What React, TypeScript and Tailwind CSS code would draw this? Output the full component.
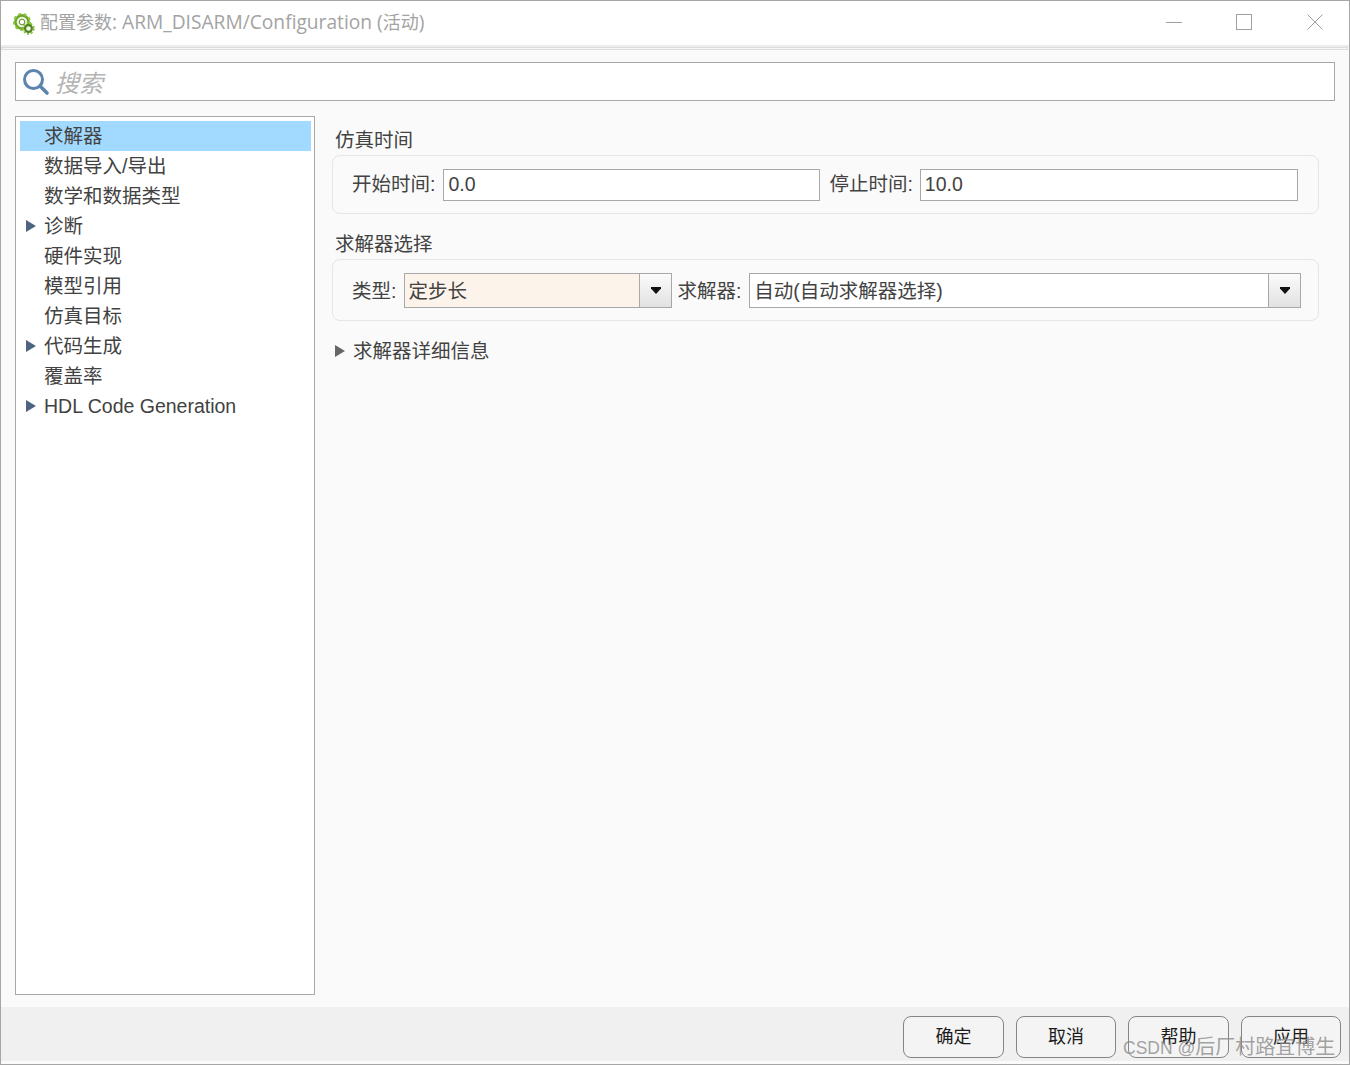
const FONT = "font-['Liberation_Sans','Noto_Sans_CJK_SC',sans-serif]";

const treeItems = [
  { label: "求解器", selected: true },
  { label: "数据导入/导出" },
  { label: "数学和数据类型" },
  { label: "诊断", arrow: true },
  { label: "硬件实现" },
  { label: "模型引用" },
  { label: "仿真目标" },
  { label: "代码生成", arrow: true },
  { label: "覆盖率" },
  { label: "HDL Code Generation", arrow: true },
];

function GearLogo() {
  return (
    <svg width="22" height="22" viewBox="0 0 22 22">
      <circle cx="9" cy="9" r="6.6" fill="#eef5dc" stroke="#6fa52c" strokeWidth="2.6" />
      <circle cx="9" cy="9" r="8" fill="none" stroke="#8cc63f" strokeWidth="2" strokeDasharray="3 2.6" />
      <circle cx="9" cy="9" r="2.8" fill="#fff" stroke="#5f8f2a" strokeWidth="1" />
      <circle cx="15.5" cy="15.5" r="5.4" fill="none" stroke="#86bf3a" strokeWidth="1.6" strokeDasharray="2.2 1.6" />
      <circle cx="15.5" cy="15.5" r="3.4" fill="#f4f8ea" stroke="#4f8420" strokeWidth="2.2" />
    </svg>
  );
}

function SearchGlass() {
  return (
    <svg width="28" height="28" viewBox="0 0 28 28">
      <circle cx="11.5" cy="11.5" r="9" fill="none" stroke="#5c85ad" strokeWidth="3" />
      <path d="M18.5 18.5 L25 25" stroke="#5c85ad" strokeWidth="3.6" strokeLinecap="round" />
    </svg>
  );
}

function Triangle({ color }: { color: string }) {
  return (
    <svg width="10" height="14" viewBox="0 0 10 14">
      <path d="M0 1 L10 7 L0 13 Z" fill={color} />
    </svg>
  );
}

function DropButton() {
  return (
    <div className="w-[32px] h-full border-l border-[#a8a8a8] bg-gradient-to-b from-[#fbfbfb] to-[#e2e2e2] flex items-center justify-center">
      <svg width="10" height="7" viewBox="0 0 10 7">
        <path d="M0 0 H10 V1.5 L5 7 L0 1.5 Z" fill="#111" />
      </svg>
    </div>
  );
}

function FooterButton({ label, width }: { label: string; width: string }) {
  return (
    <button className={`${width} h-[42px] rounded-[8px] border border-[#858585] bg-[#f4f4f4] text-[18px] text-[#1c1c1c]`}>
      {label}
    </button>
  );
}

export default function App() {
  return (
    <div className={`${FONT} relative w-[1350px] h-[1065px] flex flex-col overflow-hidden border border-[#a6a6a6] bg-[#fafafa] text-[19.5px] text-[#424242]`}>
      <div className="h-[44px] shrink-0 bg-white flex items-center">
        <div className="ml-[12px] mr-[5px] mt-[1px]">
          <GearLogo />
        </div>
        <span className="font-['Open_Sans','Noto_Sans_CJK_SC',sans-serif] text-[19.2px] text-[#a3a3a3] leading-none mt-[-2px]">
          <span className="text-[18px]">配置参数</span>: ARM_DISARM/Configuration (<span className="text-[18px]">活动</span>)
        </span>
        <div className="ml-auto flex items-center mt-[-2px]">
          <div className="w-[16px] h-px bg-[#a0a0a0] mr-[54px]" />
          <div className="w-[16px] h-[16px] border border-[#a0a0a0] mr-[55px]" />
          <svg width="16" height="16" viewBox="0 0 16 16" className="mr-[26px]">
            <path d="M0.5 0.5 L15.5 15.5 M15.5 0.5 L0.5 15.5" stroke="#a0a0a0" strokeWidth="1" />
          </svg>
        </div>
      </div>
      <div className="h-[2px] shrink-0 bg-[#ececec]" />
      <div className="h-[3px] shrink-0 mr-[1px] border border-[#dcdcdc] bg-[#f4f4f4]" />

      <div className="flex-1 flex flex-col px-[14px] pt-[12px] min-h-0">
        <div className="h-[39px] shrink-0 border border-[#a8a8a8] bg-white flex items-center pl-[6px]">
          <SearchGlass />
          <span className="ml-[5px] mt-[4px] text-[24px] italic text-[#b4b4b4]">搜索</span>
        </div>

        <div className="flex mt-[15px] h-[879px] shrink-0">
          <div className="w-[300px] shrink-0 border border-[#a8a8a8] bg-white p-[4px] pr-[3px]">
            {treeItems.map((item) => (
              <div
                key={item.label}
                className={`h-[30px] flex items-center ${item.selected ? "bg-[#a2d9ff]" : ""}`}
              >
                <div className="w-[24px] shrink-0 pl-[6px] flex items-center">
                  {item.arrow && <Triangle color="#4d6580" />}
                </div>
                <span className="whitespace-nowrap pt-[2px]">{item.label}</span>
              </div>
            ))}
          </div>

          <div className="flex-1 pl-[17px] pr-[16px]">
            <div className="pl-[3px] h-[39px] flex items-end">仿真时间</div>
            <div className="h-[59px] rounded-[8px] border border-[#e6e6e6] flex items-center pl-[19px] pr-[20px]">
              <span className="whitespace-nowrap">开始时间:</span>
              <div className="ml-[8px] w-[377px] h-[32px] border border-[#a8a8a8] bg-white pl-[4px] flex items-center">0.0</div>
              <span className="ml-[9px] whitespace-nowrap">停止时间:</span>
              <div className="ml-[7px] flex-1 h-[32px] border border-[#a8a8a8] bg-white pl-[4px] flex items-center">10.0</div>
            </div>

            <div className="pl-[3px] h-[45px] flex items-end">求解器选择</div>
            <div className="h-[62px] rounded-[8px] border border-[#e6e6e6] flex items-center pl-[19px] pr-[17px]">
              <span className="whitespace-nowrap pt-[4px]">类型:</span>
              <div className="ml-[8px] w-[268px] h-[35px] border border-[#a8a8a8] bg-white flex">
                <div className="flex-1 bg-[#fcf3ea] pl-[3px] pt-[4px] flex items-center">定步长</div>
                <DropButton />
              </div>
              <span className="ml-[5px] whitespace-nowrap pt-[4px]">求解器:</span>
              <div className="ml-[8px] flex-1 h-[35px] border border-[#a8a8a8] bg-white flex">
                <div className="flex-1 pl-[4px] pt-[4px] flex items-center">自动(自动求解器选择)</div>
                <DropButton />
              </div>
            </div>

            <div className="mt-[15px] h-[30px] flex items-center pl-[3px]">
              <Triangle color="#666666" />
              <span className="ml-[8px] pt-[2px]">求解器详细信息</span>
            </div>
          </div>
        </div>
      </div>

      <div className="h-[54px] shrink-0 mb-[3px] bg-[#f0f0f0] flex items-start justify-end gap-[12px] pt-[9px] pr-[8px]">
        <FooterButton label="确定" width="w-[101px]" />
        <FooterButton label="取消" width="w-[100px]" />
        <FooterButton label="帮助" width="w-[101px]" />
        <FooterButton label="应用" width="w-[100px]" />
      </div>

      <span className="absolute left-[1122px] top-[1031px] whitespace-nowrap text-[20px] text-[#8c8c8c]/80">
        <span className="text-[17.5px]">CSDN @</span>后厂村路宜博生
      </span>
    </div>
  );
}
